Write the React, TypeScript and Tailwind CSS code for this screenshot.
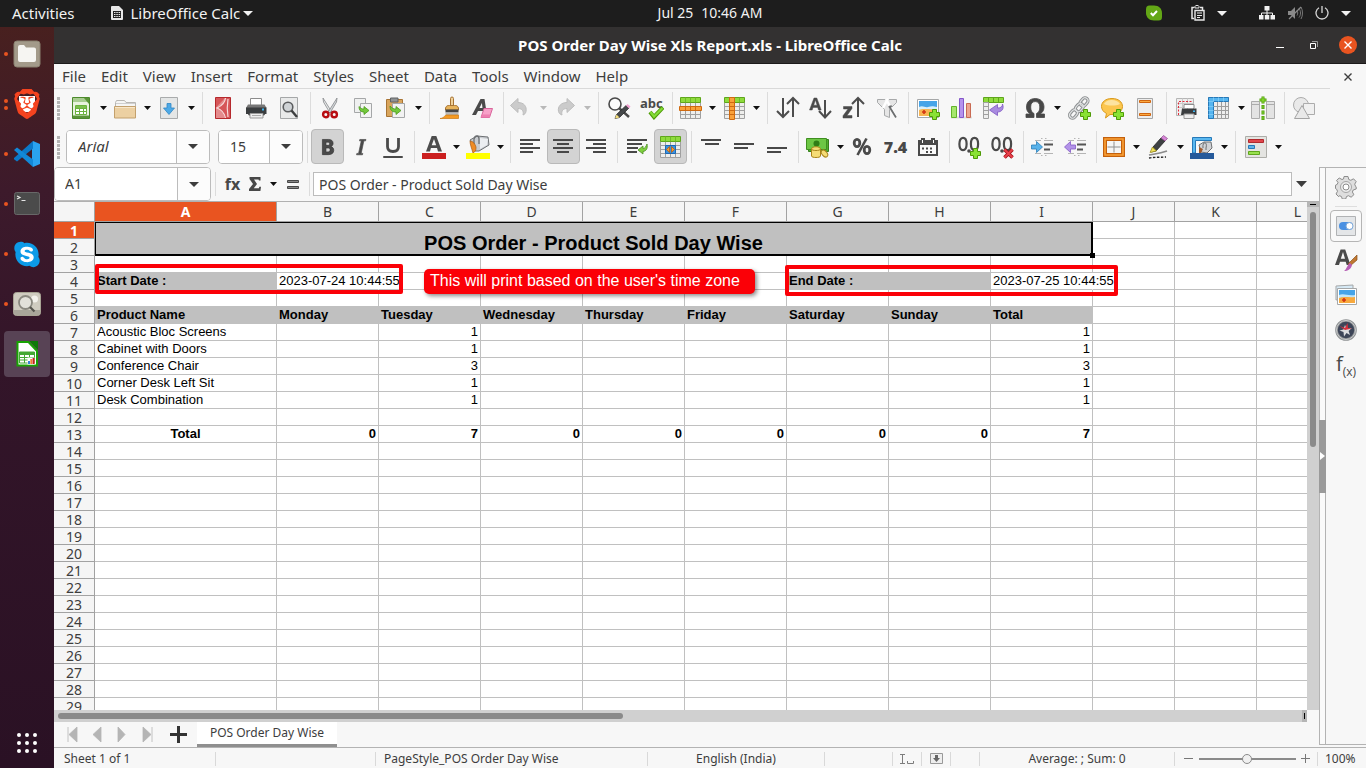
import type { ReactNode } from "react";
import { FaSkype } from "react-icons/fa";
import { SiBrave } from "react-icons/si";

/* ---------- drawing helpers ---------- */

function Icon({ children, label }: { children: ReactNode; label?: string }) {
  return (
    <svg width="24" height="24" viewBox="0 0 24 24" fill="none" role="img" aria-label={label} className="shrink-0">
      {children}
    </svg>
  );
}

function Plus({ x, y }: { x: number; y: number }) {
  return (
    <path
      transform={`translate(${x} ${y})`}
      d="M3.5.5h4v3h3v4h-3v3h-4v-3h-3v-4h3z"
      fill="#8ae234"
      stroke="#4e9a06"
    />
  );
}

function GridBase({ x = 2, y = 1 }: { x?: number; y?: number }) {
  return (
    <g transform={`translate(${x} ${y})`}>
      <path d="M.5.5h20v21H.5z" fill="#eeeeec" />
      <path d="M.5 5.500v16h20v-16M.5 13.500h20M.5 9.500h20M.5 17.500h20M5.500 5.500v16M10.500 5.500v16M15.500 5.500v16" stroke="#a0a0a0" />
      <path d="M.5.5h20v5H.5z" fill="#8edb3c" stroke="#5fa61c" />
      <path d="M5.500.5v5M10.500.5v5M15.500.5v5" stroke="#6fb92c" />
    </g>
  );
}

const decimals = (
  <>
    <path
      d="M6 2.800c2.600 0 3.600 3 3.600 6.200s-1 6.200-3.600 6.200S2.400 12 2.400 9 3.400 2.800 6 2.800zM17.500 2.800c2.600 0 3.600 3 3.600 6.200s-1 6.200-3.600 6.200-3.600-3.200-3.600-6.200 1-6.200 3.600-6.200z"
      stroke="#4a4a4a"
      strokeWidth="2.200"
    />
    <circle cx="12" cy="16" r="1.800" fill="#4a4a4a" />
  </>
);

const indentLines = (
  <>
    <path d="M4 5.500h6M13 5.500h9M4 18.500h6M13 18.500h9M10 3.500h1.500M14 3.500h1.500M10 20.500h1.500M14 20.500h1.500" stroke="#b5b5b5" />
    <path d="M13 9.500h9M13 14.500h6" stroke="#555" strokeWidth="2" />
  </>
);

const ic = {
  newDoc: (
    <>
      <path d="M3.500 1.500h17v21h-17z" fill="#e9f3df" stroke="#4c8a2b" />
      <path d="M4 2h16v4H4z" fill="#a9cd92" />
      <path d="M15 2h5v6z" fill="#5a9438" />
      <path d="M4 19.500h16V22H4z" fill="#5a9438" />
      <path d="M6.500 9.500h11v9h-11z" fill="#fff" stroke="#6cb33e" />
      <path d="M6.500 12.500h11M6.500 15.500h11M10.500 9.500v9M14.500 9.500v9" stroke="#6cb33e" />
      <path d="M7 10h10v2H7z" fill="#7cc04e" />
    </>
  ),
  open: (
    <>
      <path d="M2.500 20V6.500l1-2h8l1.500 2h9.500V20z" fill="#f5f5f4" stroke="#b8b6b2" />
      <path d="M3 7.500h19" stroke="#cfcfcf" />
      <path d="M1.500 10.500h21V22h-21z" fill="#ecd0a2" stroke="#c3a06c" />
      <path d="M2 11.500h20" stroke="#f8e6c8" />
    </>
  ),
  save: (
    <>
      <path d="M3.500 1.500h17v21h-17z" fill="#e4e6e6" stroke="#a9abac" />
      <path d="M10 7.500h4V12h3.500L12 18.500 6.500 12H10z" fill="#4da9e6" stroke="#2f87c4" strokeWidth=".8" />
    </>
  ),
  pdf: (
    <>
      <path d="M4.500 1.500h15v21h-15z" fill="#d65659" stroke="#b5292d" />
      <path d="M14 2L5 11.500V22h9c-1-5-4-8-8-10 4-2 8-5 8-10z" fill="#e48b8d" />
      <path d="M14.500 2c-.5 5-4 8-8.500 10 4 1.500 7.500 5 8.500 10M17 3c-1 6-1 12 0 18" stroke="#f7dcdc" strokeWidth="1.200" />
    </>
  ),
  print: (
    <>
      <path d="M6.500 9V2.500h11V9" fill="#fff" stroke="#8c8c8c" />
      <path d="M4 8.500h16.500l2 3.500H2z" fill="#777" />
      <path d="M2 11.500h20.500V18H2z" fill="#3a3d3f" />
      <path d="M4 18h17l-1 1.500H5z" fill="#222" />
      <path d="M6 17.500h13v4.500H6z" fill="#eee" stroke="#999" />
      <path d="M8 19.500h9" stroke="#aaa" />
      <path d="M18 12.500h2v2h-2z" fill="#3fb6f0" />
    </>
  ),
  preview: (
    <>
      <path d="M3.500 1.500h17v21h-17z" fill="#e9eaea" stroke="#a5a7a8" />
      <circle cx="11" cy="11" r="4.800" fill="#cfd3d6" stroke="#5b5d5f" strokeWidth="1.600" />
      <path d="M14.500 14.500l5.500 6.500" stroke="#3d3f40" strokeWidth="2.400" />
    </>
  ),
  cut: (
    <>
      <path d="M5 2l8.500 13.500-1.500 1.500L5.500 6z" fill="#e7e9ea" stroke="#85888a" strokeWidth=".8" />
      <path d="M19 2l-8.500 13.500 1.500 1.500 6.500-11z" fill="#d3d7da" stroke="#85888a" strokeWidth=".8" />
      <ellipse cx="7.800" cy="18.500" rx="2.700" ry="2.700" stroke="#b80d12" strokeWidth="2.400" />
      <ellipse cx="16.200" cy="18.500" rx="2.700" ry="2.700" stroke="#b80d12" strokeWidth="2.400" />
    </>
  ),
  copy: (
    <>
      <path d="M3.500 2.500h11v14h-11z" fill="#eff0f0" stroke="#a5a7a8" />
      <path d="M9.500 7.500h11v14h-11z" fill="#f4f4f4" stroke="#a5a7a8" />
      <path d="M8 10.500c0 4 2 5.500 5 5.500v2.500l5-4-5-4V13c-2 0-3-.5-5-2.500z" fill="#73c83c" stroke="#4a9a1a" strokeWidth=".8" />
    </>
  ),
  paste: (
    <>
      <path d="M2.500 3.500h16v17h-16z" fill="#d9a55c" stroke="#a87434" />
      <path d="M6.500 2h7.500v4H6.500z" fill="#8f9294" stroke="#606365" />
      <path d="M8.500 7.500h12v14h-12z" fill="#f2f2f2" stroke="#a5a7a8" />
      <path d="M6 10c0 4 2 6 6 6v2.500l5-4-5-4V13c-2 0-4-.5-6-3z" fill="#73c83c" stroke="#4a9a1a" strokeWidth=".8" />
    </>
  ),
  brush: (
    <>
      <path d="M12.500 10V2.500a1.500 1.500 0 013 0V10z" fill="#efd19b" stroke="#a87434" />
      <path d="M7.500 12c1-2.500 2-2.500 4-2.500h5c2 0 3 0 4 2.500v2h-13z" fill="#e8b45c" stroke="#a87434" />
      <path d="M7.500 13.500h13v3h-13z" fill="#444" />
      <path d="M7.500 16.500h13v2.500h-13z" fill="#bbb" />
      <path d="M8 19h12.500v3.500H2c3 0 4-2 6-3.500z" fill="#f59a23" stroke="#c97913" strokeWidth=".7" />
    </>
  ),
  clear: (
    <>
      <path d="M1 19L9.500 3h4L16 19h-3.500l-.5-4H7l-2 4zM8.500 12h3l-.6-5z" fill="#4a4a4a" />
      <path d="M13 12.500h8.500l-3 9H10z" fill="#f7a1c8" stroke="#d9659c" />
      <path d="M11 18.500h8.500l-1 3H10z" fill="#ee7fb0" />
    </>
  ),
  undo: <path d="M1.500 9.500L9 2.500v4c6 0 9 4 8 9-.5 2-1.500 3-3 3.500 1-4-1-6.500-5-6.500v4z" fill="#cbcbcb" stroke="#bdbdbd" />,
  redo: <path d="M21.500 9.500L14 2.500v4c-6 0-9.500 4-8.500 9 .5 2 2 3 3.500 3.500-1-4 1-6.500 5-6.500v4z" fill="#cbcbcb" stroke="#bdbdbd" />,
  find: (
    <>
      <circle cx="8" cy="8" r="6" fill="#fbfbfb" stroke="#4a4a4a" strokeWidth="1.600" />
      <path d="M12 12l10 9" stroke="#4a4a4a" strokeWidth="2.400" />
      <path d="M19 9.500l3 2.500-9.500 9.500-4.500 1 1.500-4z" fill="#45484a" stroke="#222" strokeWidth=".7" />
      <path d="M19 9.500l1.500-1.500 3 2.500-1.500 2z" fill="#f0a1cf" />
      <path d="M9.500 18.500l3 3-4.500 1z" fill="#f5df7d" />
    </>
  ),
  spell: (
    <>
      <text x="0" y="12" fontSize="13" fontWeight="700" fill="#4a4a4a" fontFamily="Open Sans, sans-serif">
        abc
      </text>
      <path d="M10 16l4 5L23 11.500" stroke="#4e9a06" strokeWidth="4" />
      <path d="M10.500 16l3.500 4.500L22.500 12" stroke="#83dc36" strokeWidth="2.200" />
    </>
  ),
  rows: (
    <>
      <GridBase />
      <path d="M1.500 10.500h22v4h-22z" fill="#f9a13a" stroke="#cf6a10" />
      <path d="M7.500 10.500v4M12.500 10.500v4M17.500 10.500v4" stroke="#cf6a10" />
    </>
  ),
  cols: (
    <>
      <GridBase />
      <path d="M7.500 1.500h5v22h-5z" fill="#f9a13a" stroke="#cf6a10" />
      <path d="M7.500 6.500h5M7.500 10.500h5M7.500 14.500h5M7.500 18.500h5" stroke="#cf6a10" />
    </>
  ),
  sort: <path d="M7 2v18M1 15l6 6 6-6M17 21V3M11 8l6-6 6 6" stroke="#4d4d4d" strokeWidth="2" />,
  sortAsc: (
    <>
      <path d="M.5 14L5 2h2.800l4.400 12H9.500l-.8-2.600H4L3.200 14zM4.700 9.200h3.400L6.400 4z" fill="#4a4a4a" stroke="#4a4a4a" strokeWidth=".5" />
      <path d="M16 4v17M10 15l6 6.500 6-6.500" stroke="#4d4d4d" strokeWidth="2" />
    </>
  ),
  sortDesc: (
    <>
      <path d="M1.500 10.500h8.500v2L5 19.500h5v2.500H1v-2.200l5-6.800H1.500z" fill="#4a4a4a" stroke="#4a4a4a" strokeWidth=".5" />
      <path d="M16 21V3M10 8l6-6 6 6" stroke="#4d4d4d" strokeWidth="2" />
    </>
  ),
  filter: (
    <>
      <path d="M2.500 3.500h19v3l-7 7v8l-5-2v-6l-7-7z" fill="#e6e6e6" stroke="#a7a9aa" />
      <path d="M13 2.500L8 12M11 3l10 18.500" stroke="#fff" strokeWidth="2.600" />
      <path d="M14 10l7 11.500M14.500 12.500l2-3" stroke="#6d6f70" strokeWidth="1.800" />
    </>
  ),
  image: (
    <>
      <path d="M1.500 3.500h21v18h-21z" fill="#fff" stroke="#a5a7a8" />
      <path d="M3 5h18v9H3z" fill="#46a4e8" />
      <path d="M3 11c4-2 6 1 9 0s5-1 9 0v3H3z" fill="#d9effb" />
      <path d="M3 14c4-2 10 0 18-1v7H3z" fill="#f8b552" />
      <path d="M8 14v4M6 16h4" stroke="#d33413" strokeWidth="1.600" />
      <Plus x={13} y={13} />
    </>
  ),
  chart: (
    <>
      <path d="M2 21.500h21" stroke="#ddd" strokeWidth="2" />
      <path d="M2.500 10.500h5v11h-5z" fill="#a6e66e" stroke="#63b32a" />
      <path d="M10.500 2.500h4v19h-4z" fill="#b592ec" stroke="#8457c9" />
      <path d="M17.500 7.500h4v14h-4z" fill="#eda48f" stroke="#c96a52" />
    </>
  ),
  pivot: (
    <>
      <path d="M1.500 1.500h20v5h-20z" fill="#8edb3c" stroke="#5fa61c" />
      <path d="M6.500 1.500v5M11.500 1.500v5M16.500 1.500v5" stroke="#5fa61c" />
      <path d="M1.500 6.500h5v16h-5zM1.500 10.500h5M1.500 14.500h5M1.500 18.500h5" fill="#eee" stroke="#a0a0a0" />
      <path d="M20.500 8c2 5-1 8-5 8v3.500L7.500 14l8-5.500V12c3 0 5-1 5-4z" fill="#a98be0" stroke="#7d57c1" strokeWidth=".8" />
    </>
  ),
  omega: (
    <path
      d="M3 21.500V18h4.500C4.500 16.500 3.500 14 3.500 11c0-5 3.500-8.500 8.700-8.500S21 6 21 11c0 3-1.200 5.500-4 7h4.500v3.500h-8v-4c2.500-1 3.300-3.500 3.300-6.500 0-3.500-1.600-5.400-4.600-5.400S7.700 7.500 7.700 11c0 3 .9 5.500 3.300 6.500v4z"
      fill="#484848"
      stroke="#484848"
      strokeWidth=".8"
    />
  ),
  link: (
    <>
      <g stroke="#8d9092" strokeWidth="3.200">
        <rect x="12.500" y="3" width="9" height="6" rx="3" transform="rotate(-50 17 6)" />
        <rect x="8" y="9" width="9" height="6" rx="3" transform="rotate(-50 12 12)" />
        <rect x="2" y="15" width="9" height="6" rx="3" transform="rotate(-50 6.500 18)" />
      </g>
      <g stroke="#dfe1e2" strokeWidth="1.200">
        <rect x="12.500" y="3" width="9" height="6" rx="3" transform="rotate(-50 17 6)" />
        <rect x="8" y="9" width="9" height="6" rx="3" transform="rotate(-50 12 12)" />
        <rect x="2" y="15" width="9" height="6" rx="3" transform="rotate(-50 6.500 18)" />
      </g>
      <Plus x={13} y={13} />
    </>
  ),
  comment: (
    <>
      <path d="M12 2.500c6.500 0 10.500 3.500 10.500 8S18 18.500 12 18.500h-2L5.500 22l1-4.500c-3-1.500-5-4-5-7 0-4.500 4-8 10.500-8z" fill="#fcc64f" stroke="#d99a1d" />
      <path d="M4 8c2-3.500 5-4 8-4s6 1 8 4c-4 2-12 2-16 0z" fill="#fde3a0" />
      <Plus x={13} y={13} />
    </>
  ),
  headerFooter: (
    <>
      <path d="M4.500 2.500h15v20h-15z" fill="#ededed" stroke="#a5a7a8" />
      <path d="M6.500 4.500h11v2h-11zM6.500 17.500h11v2h-11z" fill="#fba941" stroke="#d0650e" />
    </>
  ),
  printArea: (
    <>
      <path d="M2.500 2.500h17v17h-17z" fill="#eee" stroke="#b5b5b5" />
      <path d="M2.500 7.500h17M2.500 11.500h17M8.500 2.500v17M13.500 2.500v17" stroke="#c9c9c9" />
      <path d="M4.500 19V5.500H19" stroke="#e22b3a" strokeDasharray="2 1.500" />
      <path d="M10 12V8.500h10V12" fill="#fff" stroke="#8c8c8c" />
      <path d="M8 12.500h14.500V19H7z" fill="#3a3d3f" />
      <path d="M10 18h10v4.500H10z" fill="#eee" stroke="#999" />
      <path d="M19 14.500h2v1.500h-2z" fill="#3fb6f0" />
    </>
  ),
  freeze: (
    <>
      <path d="M1.500 1.500h20v21h-20z" fill="#eee" stroke="#a0a0a0" />
      <path d="M1.500 10.500h20M1.500 14.500h20M1.500 18.500h20M10.500 6v16M14.500 6v16M18.500 6v16" stroke="#9d9d9d" />
      <path d="M1.500 1.500h20v4h-15v17h-5z" fill="#55b5f0" stroke="#2779b8" />
      <path d="M6.500 1.500v4h-5M11.500 1.500v4M16.500 1.500v4M1.500 10.500h5M1.500 14.500h5M1.500 18.500h5" stroke="#79c8f5" />
    </>
  ),
  splitWin: (
    <>
      <path d="M.5 5.500h8v17h-8zM15.500 5.500h8v17h-8z" fill="#e3e3e3" stroke="#acacac" />
      <path d="M0 8.500h9M15 8.500h9" stroke="#acacac" />
      <path d="M12 .5v7M8.500 4h7" stroke="#4e9a06" strokeWidth="3" />
      <path d="M12 1v6M9 4h6" stroke="#8ae234" strokeWidth="1.200" />
      <path d="M12 9v15" stroke="#4e9a06" strokeWidth="3" strokeDasharray="4 1.500" />
      <path d="M12 9.500v14" stroke="#7cd235" strokeWidth="1.200" strokeDasharray="3 2.500" />
    </>
  ),
  shapes: (
    <>
      <circle cx="9" cy="9" r="7.500" fill="#e9e9e9" stroke="#acacac" />
      <path d="M11.500 7.500h11v11h-11z" fill="#f0f0f0" stroke="#acacac" />
      <path d="M10 9.500l7.500 13h-15z" fill="#e9e9e9" stroke="#a4a4a4" />
    </>
  ),
  bold: (
    <path
      transform="translate(2.500 2) scale(.82)"
      d="M6 3h7.500c3.500 0 5.500 1.700 5.500 4.700 0 2-1 3.400-2.700 4 2.200.5 3.500 2.100 3.500 4.500 0 3.300-2.200 5.300-6.300 5.300H6zM10.300 6.300v3.900h2.400c1.400 0 2.100-.7 2.100-2s-.7-1.900-2.200-1.900zm0 7.100v4.800h2.700c1.600 0 2.400-.9 2.400-2.500s-.9-2.300-2.500-2.300z"
      fill="#4a4a4a"
      stroke="#333"
      strokeWidth=".8"
    />
  ),
  italic: <path transform="translate(4 2) scale(.82)" d="M9.500 3h7.500l-.4 1.700h-2.100L11.200 20h2l-.4 1.700H5.500l.4-1.700H8L11.300 4.700h-2.200z" fill="#4a4a4a" stroke="#4a4a4a" strokeWidth=".8" />,
  underline: (
    <>
      <path d="M6.500 3v8.500c0 3.300 1.800 5 5.500 5s5.500-1.700 5.500-5V3" stroke="#4a4a4a" strokeWidth="2.800" />
      <path d="M2.500 21.500h19v1h-19z" fill="#fff" stroke="#4a4a4a" />
    </>
  ),
  fontColor: (
    <>
      <path d="M4 16.500L9.700 1h4.600L20 16.500h-4l-1-3.400H8.900L8 16.500zM9.700 10.200h4.500L12 3.900z" fill="#4d4d4d" />
      <path d="M0 18h24v6H0z" fill="#cb1f1f" />
    </>
  ),
  fill: (
    <>
      <path d="M4 5l7-4 11 1 1 8-10 6H9z" fill="#c9ccd0" stroke="#6d7073" />
      <path d="M14 3l8 1-1 6-7 4z" fill="#eceef1" />
      <path d="M8 9V4c1-4 5-4 5 0v5" stroke="#6d7073" strokeWidth="1.300" />
      <path d="M4 6c3 0 5 3 6 6 0 3 0 4-3 6-1-4-3-8-3-12z" fill="#ef8b24" stroke="#a85a12" strokeWidth=".7" />
      <path d="M0 18h24v6H0z" fill="#ffff00" />
    </>
  ),
  left: <path d="M2 5h20M2 9h13M2 13h20M2 17h13" stroke="#484848" strokeWidth="2" />,
  center: <path d="M2 5h20M6 9h12M2 13h20M6 17h12" stroke="#484848" strokeWidth="2" />,
  right: <path d="M2 5h20M9 9h13M2 13h20M9 17h13" stroke="#484848" strokeWidth="2" />,
  wrap: (
    <>
      <path d="M2 5h20M2 9h15M2 13h11M2 17h10" stroke="#484848" strokeWidth="2" />
      <path d="M22 9c1 5-1 7-4 7.500V19l-5-4 5-4v2.500c2 0 3-2 4-4.500z" fill="#7fd03e" stroke="#4a8f20" strokeWidth=".8" />
    </>
  ),
  merge: (
    <>
      <GridBase y={1} />
      <path d="M7.500 10.500h10v8h-10z" fill="#3d92df" stroke="#1c69b4" />
      <path d="M11.500 11.500v6l-3-3zM13.500 11.500v6l3-3z" fill="#f79a2e" stroke="#b85c0a" strokeWidth=".7" />
    </>
  ),
  top: <path d="M2 5h20M6 9h14" stroke="#484848" strokeWidth="2" />,
  middle: <path d="M2 9h20M2 13h14" stroke="#484848" strokeWidth="2" />,
  bottom: <path d="M2 13h20M2 17h14" stroke="#484848" strokeWidth="2" />,
  currency: (
    <>
      <path d="M2.500 4.500h20v12h-20z" fill="#4fae2c" stroke="#357f1b" />
      <path d="M.5 3.500h20v11H.5z" fill="#6cc644" stroke="#3f8f20" />
      <circle cx="10.500" cy="8.500" r="3" fill="#2f7d16" />
      <path d="M5.500 14c0-3 9-3 9 0v7c0 2-9 2-9 0z" fill="#f5dc76" stroke="#a9841b" />
      <path d="M5.500 14c0 2 9 2 9 0" stroke="#a9841b" />
      <ellipse cx="18.500" cy="18.500" rx="2.500" ry="4" transform="rotate(-40 18.500 18.500)" fill="#f5dc76" stroke="#a9841b" />
    </>
  ),
  percent: (
    <>
      <ellipse cx="7" cy="8" rx="2.800" ry="3.600" stroke="#4a4a4a" strokeWidth="2.800" />
      <ellipse cx="17" cy="15" rx="2.800" ry="3.600" stroke="#4a4a4a" strokeWidth="2.800" />
      <path d="M16.500 3.500L7.500 20" stroke="#4a4a4a" strokeWidth="2.600" />
    </>
  ),
  date: (
    <>
      <path d="M3 6h18v14H3z" fill="#fafafa" stroke="#4a4a4a" strokeWidth="2" />
      <path d="M2 5h20v5H2zM5 3h4v3H5zM15 3h4v3h-4z" fill="#4a4a4a" />
      <path d="M6.500 5v3M17.500 5v3" stroke="#fff" />
      <path d="M6 13.500h2M10 13.500h2M14 13.500h2M10 17h2M14 17h2" stroke="#4a4a4a" strokeWidth="2" />
    </>
  ),
  addDec: (
    <>
      {decimals}
      <Plus x={13} y={13} />
    </>
  ),
  delDec: (
    <>
      {decimals}
      <path d="M14.500 14.500l8 8M22.500 14.500l-8 8" stroke="#a50f17" strokeWidth="3.600" />
      <path d="M14.500 14.500l8 8M22.500 14.500l-8 8" stroke="#e8414b" strokeWidth="1.800" />
    </>
  ),
  indent: (
    <>
      {indentLines}
      <path d="M.5 10h5V6.500l6 5.500-6 5.500V14h-5z" fill="#58b2ea" stroke="#2b7db8" strokeWidth=".8" />
    </>
  ),
  outdent: (
    <>
      {indentLines}
      <path d="M11.500 10h-5V6.500L.5 12l6 5.500V14h5z" fill="#b293e8" stroke="#8459c7" strokeWidth=".8" />
    </>
  ),
  borders: (
    <>
      <path d="M3 4h18v16H3z" fill="#f5f5f5" stroke="#c4600c" strokeWidth="4" />
      <path d="M3 4h18v16H3z" stroke="#fba237" strokeWidth="1.600" />
      <path d="M12 6.500v11M5.500 12h13" stroke="#8f8f8f" />
    </>
  ),
  lineStyle: (
    <>
      <path d="M15 3l4 3-9 10-5 1 2-5z" fill="#3f4244" stroke="#222" strokeWidth=".8" />
      <path d="M15 3l2.500-2.500 4 3L19 6z" fill="#d886d8" stroke="#8a4d8a" strokeWidth=".7" />
      <path d="M6.500 12l4 4-6.500 1.500z" fill="#f0e25c" stroke="#9e8d18" strokeWidth=".7" />
      <path d="M3 20c4-1 10-1 18-4" stroke="#8a8a8a" strokeWidth="1.600" />
      <path d="M3 23c5-1 9-.5 17-1" stroke="#222" strokeDasharray="2.500 1.500" strokeWidth="1.400" />
    </>
  ),
  borderColor: (
    <>
      <path d="M2.500 18V2.500h19v3h-16V18z" fill="#5ab8f0" stroke="#2779b8" />
      <path d="M9 10l5-3h7l1 6-5 5-6-1z" fill="#d1d3d6" stroke="#6d7073" />
      <path d="M13 13c-1-7 5-7 3 0v2" stroke="#6d7073" />
      <path d="M9 12l4 2-2 4H9z" fill="#a05a2c" />
      <path d="M0 18h24v6H0z" fill="#255a9b" />
    </>
  ),
  conditional: (
    <>
      <path d="M1.500 1.500h21v21h-21z" fill="#e4e4e1" stroke="#adada8" />
      <path d="M4.500 4.500h15v3h-15z" fill="#e0464b" stroke="#b12a2e" />
      <path d="M4.500 10.500h6v3h-6z" fill="#60b4ea" stroke="#2779b8" />
      <path d="M4.500 16.500h11v3h-11z" fill="#98e04e" stroke="#5fa61c" />
    </>
  ),
};

/* ---------- toolbar parts ---------- */

function Caret({ muted = false }: { muted?: boolean }) {
  return (
    <svg width="7" height="4" viewBox="0 0 7 4" className="shrink-0">
      <path d="M0 0h7L3.500 4z" fill={muted ? "#b9b9b9" : "#111"} />
    </svg>
  );
}

function Tool({ name, art, active = false }: { name: string; art: ReactNode; active?: boolean }) {
  return (
    <button
      type="button"
      aria-label={name}
      aria-pressed={active}
      className={
        "flex h-[35px] w-[33px] shrink-0 items-center rounded-[4px] border pl-[3px] " +
        (active ? "border-[#b9b9b9] bg-[#d3d3d3]" : "border-transparent")
      }
    >
      <Icon>{art}</Icon>
    </button>
  );
}

function SplitTool({ name, art, muted = false }: { name: string; art: ReactNode; muted?: boolean }) {
  return (
    <div className="flex shrink-0 items-center">
      <Tool name={name} art={art} />
      <button type="button" aria-label={name + " options"} className="flex h-[35px] w-[11px] items-center pl-[2px]">
        <Caret muted={muted} />
      </button>
    </div>
  );
}

const sepMargins = {
  tight: "ml-[3px] mr-px",
  normal: "ml-1 mr-[3px]",
  wide: "ml-[5px] mr-1",
};

function Sep({ size = "normal" }: { size?: keyof typeof sepMargins }) {
  return <div className={"h-8 w-px shrink-0 bg-[#dcdcdc] " + sepMargins[size]} />;
}

function Grip() {
  return (
    <svg width="3" height="24" viewBox="0 0 3 24" className="ml-[3px] mr-[5px] shrink-0">
      <path d="M1.500 1v23" stroke="#b3b3b3" strokeWidth="3" strokeDasharray="3 1" />
    </svg>
  );
}

function Combo({ label, value, box, field }: { label: string; value: string; box: string; field: string }) {
  return (
    <div className={"flex shrink-0 overflow-hidden rounded-[4px] border border-[#bcbcbc] bg-white " + box}>
      <input aria-label={label} defaultValue={value} className={"min-w-0 flex-1 border-r border-[#bcbcbc] bg-white text-[#3d3d3d] outline-none " + field} />
      <button type="button" aria-label={label + " list"} className="flex w-8 items-center justify-center bg-[#fcfcfc]">
        <svg width="10" height="5" viewBox="0 0 10 5">
          <path d="M0 0h10L5 5z" fill="#3d3d3d" />
        </svg>
      </button>
    </div>
  );
}

const menus = ["File", "Edit", "View", "Insert", "Format", "Styles", "Sheet", "Data", "Tools", "Window", "Help"];

function MenuBar() {
  return (
    <div className="flex h-[25px] bg-[#f7f7f7]">
      <nav className="flex flex-1 items-center gap-px border-b border-[#d9d9d9] pl-px">
        {menus.map((m) => (
          <button key={m} type="button" className="px-[7px] text-[15px] leading-5 text-[#3d3d3d]">
            {m}
          </button>
        ))}
      </nav>
      <button type="button" aria-label="Close document" className="flex w-9 items-center justify-center">
        <svg width="8" height="8" viewBox="0 0 8 8">
          <path d="M.5.5l7 7M7.500.5l-7 7" stroke="#3d3d3d" strokeWidth="1.400" />
        </svg>
      </button>
    </div>
  );
}

function StandardBar() {
  return (
    <div className="flex h-[39px] items-center overflow-hidden bg-[#f7f7f7] pb-[2px]">
      <Grip />
      <SplitTool name="New" art={ic.newDoc} />
      <SplitTool name="Open" art={ic.open} />
      <SplitTool name="Save" art={ic.save} />
      <Sep size="wide" />
      <Tool name="Export as PDF" art={ic.pdf} />
      <Tool name="Print" art={ic.print} />
      <Tool name="Print preview" art={ic.preview} />
      <Sep />
      <Tool name="Cut" art={ic.cut} />
      <Tool name="Copy" art={ic.copy} />
      <SplitTool name="Paste" art={ic.paste} />
      <Sep size="wide" />
      <Tool name="Clone formatting" art={ic.brush} />
      <Tool name="Clear formatting" art={ic.clear} />
      <Sep size="tight" />
      <SplitTool name="Undo" art={ic.undo} muted />
      <SplitTool name="Redo" art={ic.redo} muted />
      <Sep size="wide" />
      <Tool name="Find and replace" art={ic.find} />
      <Tool name="Spelling" art={ic.spell} />
      <Sep size="tight" />
      <SplitTool name="Row" art={ic.rows} />
      <SplitTool name="Column" art={ic.cols} />
      <Sep size="wide" />
      <Tool name="Sort" art={ic.sort} />
      <Tool name="Sort ascending" art={ic.sortAsc} />
      <Tool name="Sort descending" art={ic.sortDesc} />
      <Tool name="AutoFilter" art={ic.filter} />
      <Sep />
      <Tool name="Insert image" art={ic.image} />
      <Tool name="Insert chart" art={ic.chart} />
      <Tool name="Pivot table" art={ic.pivot} />
      <Sep />
      <SplitTool name="Special character" art={ic.omega} />
      <Tool name="Hyperlink" art={ic.link} />
      <Tool name="Comment" art={ic.comment} />
      <Tool name="Headers and footers" art={ic.headerFooter} />
      <Sep />
      <Tool name="Define print area" art={ic.printArea} />
      <SplitTool name="Freeze rows and columns" art={ic.freeze} />
      <Tool name="Split window" art={ic.splitWin} />
      <Sep />
      <Tool name="Show draw functions" art={ic.shapes} />
    </div>
  );
}

function FormattingBar() {
  return (
    <div className="flex h-[39px] items-center overflow-hidden bg-[#f7f7f7] pb-[2px]">
      <Grip />
      <div className="ml-px flex gap-2">
        <Combo label="Font name" value="Arial" box="h-[34px] w-[144px]" field="pl-[11px] text-[15px] italic" />
        <Combo label="Font size" value="15" box="h-[34px] w-[85px]" field="pl-[11px] text-sm" />
      </div>
      <Sep />
      <Tool name="Bold" art={ic.bold} active />
      <Tool name="Italic" art={ic.italic} />
      <Tool name="Underline" art={ic.underline} />
      <Sep />
      <SplitTool name="Font color" art={ic.fontColor} />
      <SplitTool name="Background color" art={ic.fill} />
      <Sep />
      <Tool name="Align left" art={ic.left} />
      <Tool name="Center" art={ic.center} active />
      <Tool name="Align right" art={ic.right} />
      <Sep />
      <Tool name="Wrap text" art={ic.wrap} />
      <Tool name="Merge cells" art={ic.merge} active />
      <Sep />
      <Tool name="Align top" art={ic.top} />
      <Tool name="Center vertically" art={ic.middle} />
      <Tool name="Align bottom" art={ic.bottom} />
      <Sep />
      <SplitTool name="Currency" art={ic.currency} />
      <Tool name="Percent" art={ic.percent} />
      <button type="button" className="h-[35px] w-[33px] shrink-0 text-center font-['Open_Sans',sans-serif] text-base font-extrabold text-[#484848]">
        7.4
      </button>
      <Tool name="Date" art={ic.date} />
      <Sep />
      <Tool name="Add decimal place" art={ic.addDec} />
      <Tool name="Delete decimal place" art={ic.delDec} />
      <Sep />
      <Tool name="Increase indent" art={ic.indent} />
      <Tool name="Decrease indent" art={ic.outdent} />
      <Sep size="tight" />
      <SplitTool name="Borders" art={ic.borders} />
      <SplitTool name="Border style" art={ic.lineStyle} />
      <SplitTool name="Border color" art={ic.borderColor} />
      <Sep size="wide" />
      <SplitTool name="Conditional formatting" art={ic.conditional} />
    </div>
  );
}

function FormulaBar() {
  return (
    <div className="flex h-[35px] items-center border-b border-[#b0b0b0] bg-[#f7f7f7]">
      <Combo label="Cell" value="A1" box="h-[34px] w-[157px]" field="pl-[10px] text-sm" />
      <div className="ml-1 h-6 w-px shrink-0 bg-[#dcdcdc]" />
      <button type="button" aria-label="Function wizard" className="ml-2 w-[17px] shrink-0 font-['Open_Sans',sans-serif] text-base font-bold leading-5 text-[#484848]">
        fx
      </button>
      <button type="button" aria-label="Select function" className="ml-2 flex shrink-0 items-center gap-[9px]">
        <svg width="12" height="14" viewBox="0 0 12 14">
          <path d="M.5 0h11v3.500h-1.500L9.500 2.500H5L8 7l-3.200 4.200h5l.6-1.400H12L11.400 14H0v-2l4-5L.5 2z" fill="#484848" />
        </svg>
        <Caret />
      </button>
      <button type="button" aria-label="Formula" className="ml-[10px] shrink-0">
        <svg width="12" height="9" viewBox="0 0 12 9">
          <path d="M.5.5h11v2H.5zM.5 6.500h11v2H.5z" fill="#888" stroke="#484848" />
        </svg>
      </button>
      <div className="ml-[10px] h-6 w-px shrink-0 bg-[#dcdcdc]" />
      <input
        aria-label="Input line"
        defaultValue="POS Order - Product Sold Day Wise"
        className="ml-[3px] h-6 min-w-0 flex-1 border border-[#bcbcbc] bg-white pl-[5px] text-sm text-[#3d3d3d] outline-none"
      />
      <button type="button" aria-label="Expand formula bar" className="flex w-[27px] shrink-0 pl-[4px]">
        <svg width="11" height="6" viewBox="0 0 11 6">
          <path d="M0 0h11L5.500 6z" fill="#3d3d3d" />
        </svg>
      </button>
    </div>
  );
}

/* ---------- sheet ---------- */

const columns = ["A", "B", "C", "D", "E", "F", "G", "H", "I", "J", "K", "L"];

type Cell = { text?: string; bold?: boolean; fill?: boolean; align?: "right" | "center"; spill?: boolean };

const product = (name: string, qty: string): Record<string, Cell> => ({
  A: { text: name },
  C: { text: qty, align: "right" },
  I: { text: qty, align: "right" },
});
const head = (text: string): Cell => ({ text, bold: true, fill: true });
const sum = (text: string): Cell => ({ text, bold: true, align: "right" });

const cells: Record<number, Record<string, Cell>> = {
  4: {
    A: head("Start Date :"),
    B: { text: "2023-07-24 10:44:55", spill: true },
    G: head("End Date :"),
    H: { fill: true },
    I: { text: "2023-07-25 10:44:55", spill: true },
  },
  6: {
    A: head("Product Name"),
    B: head("Monday"),
    C: head("Tuesday"),
    D: head("Wednesday"),
    E: head("Thursday"),
    F: head("Friday"),
    G: head("Saturday"),
    H: head("Sunday"),
    I: head("Total"),
  },
  7: product("Acoustic Bloc Screens", "1"),
  8: product("Cabinet with Doors", "1"),
  9: product("Conference Chair", "3"),
  10: product("Corner Desk Left Sit", "1"),
  11: product("Desk Combination", "1"),
  13: {
    A: { text: "Total", bold: true, align: "center" },
    B: sum("0"),
    C: sum("7"),
    D: sum("0"),
    E: sum("0"),
    F: sum("0"),
    G: sum("0"),
    H: sum("0"),
    I: sum("7"),
  },
};

function SheetCell({ cell }: { cell?: Cell }) {
  const fill = cell?.fill ? "bg-[#c0c0c0]" : "bg-white";
  const line = cell?.spill ? "border-r-transparent" : "border-r-[#c0c0c0]";
  const align = cell?.align === "right" ? "text-right" : cell?.align === "center" ? "text-center" : "text-left";
  return (
    <td className={`border-b border-r border-b-[#c0c0c0] px-[2px] py-0 ${line} ${fill} ${align} ${cell?.bold ? "font-bold" : ""}`}>
      {cell?.text}
    </td>
  );
}

function Sheet() {
  return (
    <div className="relative min-h-0 flex-1 overflow-hidden bg-white">
      <table className="w-[1285px] table-fixed border-separate border-spacing-0 whitespace-nowrap font-['Liberation_Sans',Arial,sans-serif] text-[13px] leading-4 text-black">
        <colgroup>
          <col className="w-[41px]" />
          <col className="w-[182px]" />
          {columns.slice(1, 9).map((c) => (
            <col key={c} className="w-[102px]" />
          ))}
          <col className="w-[82px]" />
          <col className="w-[82px]" />
          <col className="w-[82px]" />
        </colgroup>
        <thead className="font-['Noto_Sans',sans-serif] text-sm leading-[19px] text-[#3d3d3d]">
          <tr className="h-5">
            <td className="border-b border-r border-[#a2a2a2] bg-[#f5f5f5] p-0" />
            {columns.map((c) => (
              <th
                key={c}
                scope="col"
                className={
                  c === "A"
                    ? "border-b border-r border-[#a2a2a2] bg-[#e95420] p-0 font-bold text-white"
                    : "border-b border-r border-[#a2a2a2] bg-[#f5f5f5] p-0 font-normal"
                }
              >
                {c}
              </th>
            ))}
          </tr>
        </thead>
        <tbody>
          {Array.from({ length: 29 }, (_, i) => i + 1).map((r) => (
            <tr key={r} className="h-[17px]">
              <th
                scope="row"
                className={
                  r === 1
                    ? "border-b border-r border-[#a2a2a2] bg-[#e95420] px-0 pb-0 pt-[2px] font-['Noto_Sans',sans-serif] text-sm font-bold leading-[14px] text-white"
                    : "border-b border-r border-[#a2a2a2] bg-[#f5f5f5] px-0 pb-0 pt-[2px] font-['Noto_Sans',sans-serif] text-sm font-normal leading-[14px] text-[#3d3d3d]"
                }
              >
                {r}
              </th>
              {r === 1 && (
                <td
                  colSpan={9}
                  rowSpan={2}
                  className="relative border-2 border-l border-t border-black bg-[#c0c0c0] px-0 pb-0 pt-2 text-center text-xl font-bold leading-5"
                >
                  POS Order - Product Sold Day Wise
                  <span className="absolute -bottom-1 -right-1 size-[5px] bg-black" />
                </td>
              )}
              {columns.slice(r < 3 ? 9 : 0).map((c) => (
                <SheetCell key={c} cell={cells[r]?.[c]} />
              ))}
            </tr>
          ))}
        </tbody>
      </table>
      <div className="absolute left-[41px] top-[62px] h-[30px] w-[308px] rounded-[2px] border-4 border-[#fb0007]" />
      <div className="absolute left-[731px] top-[63px] h-[31px] w-[333px] rounded-[2px] border-4 border-[#fb0007]" />
      <div className="absolute left-[370px] top-[67px] w-[331px] whitespace-nowrap rounded-[5px] bg-[#fb0007] pb-[2px] pl-[6px] font-['Liberation_Sans',Arial,sans-serif] text-base leading-[23px] text-white shadow-[2px_2px_4px_rgba(0,0,0,0.45)]">
        This will print based on the user's time zone
      </div>
    </div>
  );
}

function VerticalScroll() {
  return (
    <div className="flex w-3 shrink-0 flex-col items-center bg-[#d0d0d0]">
      <div className="flex h-[5px] w-full items-center justify-center bg-[#b5b5b5]">
        <div className="h-px w-[6px] bg-black" />
      </div>
      <div className="mt-[5px] h-[235px] w-[6px] rounded-full bg-[#8a8a8a]" />
    </div>
  );
}

function HorizontalScroll() {
  return (
    <div className="mr-3 flex h-3 shrink-0 items-center bg-[#d0d0d0]">
      <div className="ml-1 h-[6px] w-[565px] rounded-full bg-[#8a8a8a]" />
      <div className="ml-auto flex h-full w-[5px] items-center justify-center bg-[#b5b5b5]">
        <div className="h-[6px] w-px bg-black" />
      </div>
    </div>
  );
}

const tabArrows = [
  { name: "First sheet", d: "M1 1v15M10 1L2 8.500 10 16z" },
  { name: "Previous sheet", d: "M9 1L1 8.500 9 16z" },
  { name: "Next sheet", d: "M1 1l7 7.500L1 16z" },
  { name: "Last sheet", d: "M10 1v15M1 1l8 7.500L1 16z" },
];

function SheetTabs() {
  return (
    <div className="flex h-[25px] shrink-0 bg-[#f7f7f7] pl-[13px]">
      {tabArrows.map((a) => (
        <button key={a.name} type="button" aria-label={a.name} className="flex w-[25px] items-center">
          <svg width="11" height="17" viewBox="0 0 11 17">
            <path d={a.d} fill="#b5b5b5" stroke="#b5b5b5" strokeWidth=".8" />
          </svg>
        </button>
      ))}
      <button type="button" aria-label="Add sheet" className="flex w-[30px] items-center pl-[3px]">
        <svg width="17" height="17" viewBox="0 0 17 17">
          <path d="M8.500 0v17M0 8.500h17" stroke="#333" strokeWidth="3" />
        </svg>
      </button>
      <button type="button" className="w-[140px] border-b-[3px] border-[#8f8f8f] bg-white text-xs leading-[22px] text-[#3d3d3d]">
        POS Order Day Wise
      </button>
    </div>
  );
}

/* ---------- sidebar ---------- */

const sidebarItems: { name: string; art: ReactNode; active?: boolean }[] = [
  {
    name: "Properties",
    active: true,
    art: (
      <>
        <path d="M2.500 2.500h19v19h-19z" fill="#e4e6e8" stroke="#b0b2b4" />
        <rect x="5" y="8" width="14" height="8" rx="4" fill="#4a90e2" />
        <circle cx="15.500" cy="12" r="3.500" fill="#fff" stroke="#7fa9d8" />
      </>
    ),
  },
  {
    name: "Styles",
    art: (
      <>
        <path d="M1 17L6.600 1.500h4.600L16.500 17h-3.800l-1-3.200H6L5 17zM6.800 10.700h4.200L9 4z" fill="#4a4a4a" />
        <path d="M23 7v5l-7 6-2-2z" fill="#c07832" stroke="#8a5018" strokeWidth=".7" />
        <path d="M16 15l2 2c-1 4-4 6-8 6 3-2 3-6 6-8z" fill="#b75fb5" />
      </>
    ),
  },
  {
    name: "Gallery",
    art: (
      <>
        <path d="M2 3l17-1v12L2 17z" fill="#d6e9f5" stroke="#a5a7a8" />
        <path d="M3.500 5.500h19v16h-19z" fill="#fff" stroke="#a5a7a8" />
        <path d="M5 7h16v7H5z" fill="#46a4e8" />
        <path d="M5 12c5-2 8 1 16 0v3H5z" fill="#bfe6fa" />
        <path d="M5 15c5-2 10 0 16-1v6H5z" fill="#f8a93d" />
        <path d="M10 15v4M8 17h4" stroke="#d33413" strokeWidth="1.600" />
      </>
    ),
  },
  {
    name: "Navigator",
    art: (
      <>
        <circle cx="12" cy="12" r="9.500" fill="#3d4558" stroke="#8e9193" strokeWidth="2.600" />
        <circle cx="12" cy="12" r="9.500" stroke="#c9cbcd" strokeWidth="1" />
        <path d="M11 7l1.800 4 5-1-3.200 3 1.400 4-3.500-2L10 18.500l-.5-4.500-4-1.500 4-1z" fill="#dcdde0" />
        <path d="M5.500 8l5.500 2 2.500-5 .5 5 4 .5-7 1.500z" fill="#d62f3c" />
      </>
    ),
  },
];

function Sidebar() {
  return (
    <div className="mb-[2px] flex shrink-0 border-b border-[#b3b3b3]">
      <div className="flex w-[7px] flex-col justify-center border-x border-t border-[#b3b3b3] bg-[#fafafa]">
        <div className="-mx-px flex h-[73px] items-center bg-[#9a9a9a]">
          <svg width="6" height="8" viewBox="0 0 6 8">
            <path d="M1 0l5 4-5 4z" fill="#fff" />
          </svg>
        </div>
      </div>
      <div className="flex w-10 flex-col items-center border-t border-[#b3b3b3] bg-[#f7f7f7] pt-[7px]">
        <button type="button" aria-label="Sidebar settings">
          <Icon>
            <path
              d="M10 1.500h4l.8 3 2 .8 2.700-1.500 2.700 2.800-1.500 2.600.8 2 .7.800v2l-3 1-.8 2 1.500 2.700-2.800 2.500-2.600-1.500-2 .8-.8 2.500h-3.400l-.9-2.500-2-.8L4.700 21.700 2 19l1.500-2.700-.8-2-1.200-.8v-3.300l1.700-.8.8-2L2.500 5.500 5.200 3 8 4.500l1.500-.5z"
              fill="#dedede"
              stroke="#8c8c8c"
            />
            <circle cx="12" cy="12" r="5.500" fill="#ececec" stroke="#a5a5a5" />
            <circle cx="12" cy="12" r="3" fill="#fff" stroke="#8c8c8c" />
          </Icon>
        </button>
        <div className="mb-[3px] mt-[7px] h-px w-[22px] bg-[#dedede]" />
        <div className="flex flex-col">
          {sidebarItems.map((s) => (
            <button
              key={s.name}
              type="button"
              aria-label={s.name}
              className={
                s.active
                  ? "flex size-8 items-center justify-center rounded-[4px] border border-[#b5b5b5] bg-[#f9f9f9]"
                  : "flex h-[35px] w-8 items-center justify-center"
              }
            >
              <Icon>{s.art}</Icon>
            </button>
          ))}
          <button type="button" aria-label="Functions" className="h-[35px] w-8 text-center font-['Open_Sans',sans-serif] text-xl leading-[30px] text-[#484848]">
            f<span className="align-sub text-xs">(x)</span>
          </button>
        </div>
      </div>
    </div>
  );
}

/* ---------- status bar ---------- */

function StatusBar() {
  return (
    <footer className="flex h-[21px] shrink-0 items-center divide-x divide-[#d9d9d9] border-t border-[#b3b3b3] bg-[#f7f7f7] pt-px text-xs leading-[14px] text-[#3d3d3d]">
      <div className="w-[162px] pl-[10px]">Sheet 1 of 1</div>
      <div className="h-[14px] w-[160px]" />
      <div className="flex-1 pl-2">PageStyle_POS Order Day Wise</div>
      <div className="w-[177px] text-center">English (India)</div>
      <div className="h-[14px] w-[68px]" />
      <div className="flex h-[14px] w-[29px] items-center justify-center">
        <svg width="16" height="12" viewBox="0 0 16 12">
          <path d="M1 1.500h5M3.500 1.500v9M1 10.500h5M8.500 8v2.500h6V8" stroke="#7d7d7d" fill="none" />
        </svg>
      </div>
      <div className="flex h-[14px] w-[29px] items-center justify-center">
        <svg width="13" height="11" viewBox="0 0 13 11">
          <path d="M.5.5h12v10H.5z" fill="#eee" stroke="#999" />
          <path d="M5 2h3v3h2L6.500 9 3 5h2z" fill="#666" />
        </svg>
      </div>
      <div className="h-[14px] w-[29px]" />
      <div className="w-[195px] text-center">Average: ; Sum: 0</div>
      <div className="flex h-[14px] w-[143px] items-center justify-between pl-[9px] pr-[7px]">
        <button type="button" aria-label="Zoom out">
          <svg width="9" height="9" viewBox="0 0 9 9">
            <path d="M0 4.500h9" stroke="#777" />
          </svg>
        </button>
        <input
          type="range"
          aria-label="Zoom"
          defaultValue={50}
          className="h-[10px] w-[97px] appearance-none bg-[linear-gradient(#8a8a8a,#8a8a8a)] bg-[length:100%_2px] bg-center bg-no-repeat [&::-webkit-slider-thumb]:size-[10px] [&::-webkit-slider-thumb]:appearance-none [&::-webkit-slider-thumb]:rounded-full [&::-webkit-slider-thumb]:border [&::-webkit-slider-thumb]:border-[#8a8a8a] [&::-webkit-slider-thumb]:bg-[#f0f0f0]"
        />
        <button type="button" aria-label="Zoom in">
          <svg width="9" height="9" viewBox="0 0 9 9">
            <path d="M0 4.500h9M4.500 0v9" stroke="#777" />
          </svg>
        </button>
      </div>
      <div className="w-[48px] pl-[7px]">100%</div>
    </footer>
  );
}

/* ---------- desktop ---------- */

function TopCaret() {
  return (
    <svg width="10" height="5" viewBox="0 0 10 5">
      <path d="M0 0h10L5 5z" fill="#f2f2f2" />
    </svg>
  );
}

function TopPanel() {
  return (
    <header className="grid h-[27px] shrink-0 grid-cols-[54px_1fr_1fr_1fr] items-center bg-[#1d1d1d] pb-px text-sm leading-5 text-[#f2f2f2]">
      <div className="col-span-2 flex items-center pl-3 text-[15px]">
        <button type="button">Activities</button>
        <button type="button" className="ml-9 flex items-center">
          <svg width="12" height="14" viewBox="0 0 12 14">
            <path d="M0 1a1 1 0 011-1h7l4 4v9a1 1 0 01-1 1H1a1 1 0 01-1-1z" fill="#e8e8e8" />
            <path d="M2 5h8v7H2z" fill="#222" />
            <path d="M3 6h1.500v1H3zM5.300 6h1.500v1H5.300zM7.600 6h1.500v1H7.600zM3 8h1.500v1H3zM5.300 8h1.500v1H5.300zM7.600 8h1.500v1H7.600zM3 10h1.500v1H3zM5.300 10h1.500v1H5.300zM7.600 10h1.500v1H7.600z" fill="#e8e8e8" />
          </svg>
          <span className="ml-2 mr-[3px]">LibreOffice Calc</span>
          <TopCaret />
        </button>
      </div>
      <button type="button" className="text-center">
        <span className="mr-2">Jul 25</span>10:46 AM
      </button>
      <div className="flex items-center justify-end pr-[15px]">
        <svg width="16" height="16" viewBox="0 0 16 16" className="mr-[29px]">
          <path d="M0 4.500C0 2 1 .5 3.500.5H8c5 0 8 3.500 8 7.500v4c0 2.500-1 3.500-3.500 3.500H8C3 15.500 0 12 0 8z" fill="#63a716" />
          <path d="M4.800 8l2.200 2.300 4-4.300" stroke="#fff" strokeWidth="2" fill="none" />
        </svg>
        <svg width="14" height="16" viewBox="0 0 14 16" fill="none" className="mr-3">
          <path d="M3 13.500H1v-11h2.500M9 2.500h2.500V5" stroke="#e8e8e8" strokeWidth="1.500" />
          <path d="M4 1.500c0-1.500 4-1.500 4 0V3H4z" stroke="#e8e8e8" />
          <path d="M4 5.500h9v9.500H4z" stroke="#e8e8e8" strokeWidth="1.400" />
          <path d="M6 8h5M6 10.500h5M6 12.500h3" stroke="#e8e8e8" />
        </svg>
        <span className="mr-8 flex">
          <TopCaret />
        </span>
        <svg width="16" height="14" viewBox="0 0 16 14" className="mr-[13px]">
          <path d="M5.500 0h5v4.500h-5zM0 9h4.500v4.500H0zM5.800 9h4.500v4.500H5.800zM11.500 9H16v4.500h-4.500z" fill="#f2f2f2" />
          <path d="M8 4v5M2.500 9.500V7h11v2.500" stroke="#f2f2f2" fill="none" />
        </svg>
        <svg width="15" height="14" viewBox="0 0 15 14" fill="none" className="mr-3">
          <path d="M0 5h3l4-4v12L3 9H0z" fill="#8a8a8a" />
          <path d="M9 4.500c1 1.500 1 3.500 0 5M11 2.500c2 2.500 2 6.500 0 9M13 1c2 3.500 2 8.500 0 12" stroke="#777" />
          <path d="M1 13L13 1" stroke="#8a8a8a" strokeWidth="1.300" />
        </svg>
        <svg width="14" height="14" viewBox="0 0 14 14" fill="none" className="mr-3">
          <path d="M4 1.800a6 6 0 106 0M7 0v7" stroke="#d8d8d8" strokeWidth="1.300" />
        </svg>
        <TopCaret />
      </div>
    </header>
  );
}

function DockIcon({ children }: { children: ReactNode }) {
  return (
    <svg width="28" height="28" viewBox="0 0 28 28" fill="none">
      {children}
    </svg>
  );
}

const dock: { name: string; dots: number; active?: boolean; art: ReactNode }[] = [
  {
    name: "Files",
    dots: 1,
    art: (
      <DockIcon>
        <rect x="1" y="1" width="26" height="26" rx="3" fill="#a39a8a" stroke="#8a8171" />
        <path d="M5 7a2 2 0 012-2h4l2 2.500h8a2 2 0 012 2V20a2 2 0 01-2 2H7a2 2 0 01-2-2z" fill="#f6f5f2" />
      </DockIcon>
    ),
  },
  {
    name: "Brave",
    dots: 2,
    art: (
      <span className="relative flex size-[30px] items-center justify-center">
        <span className="absolute size-4 bg-white" />
        <SiBrave className="relative size-[30px] text-[#f4431f]" />
      </span>
    ),
  },
  {
    name: "Visual Studio Code",
    dots: 1,
    art: (
      <DockIcon>
        <path d="M20 1l7 3v20l-7 3-1-7V8z" fill="#2aa3f0" />
        <path d="M20 1v7.500L4 21.500l-3-2.300V18z" fill="#0b79c9" />
        <path d="M1 10l3-2.500 16 12V27z" fill="#1288d8" />
      </DockIcon>
    ),
  },
  {
    name: "Terminal",
    dots: 1,
    art: (
      <DockIcon>
        <rect x="1.500" y="2.500" width="25" height="22" rx="2" fill="#4b4b4b" stroke="#686868" />
        <path d="M4 6l3 1.500L4 9M8.500 10.500h4" stroke="#e6e6e6" strokeWidth="1.200" />
      </DockIcon>
    ),
  },
  {
    name: "Skype",
    dots: 1,
    art: (
      <span className="relative flex size-7 items-center justify-center">
        <span className="absolute size-5 rounded-full bg-white" />
        <FaSkype className="relative size-[29px] text-[#0c9be8]" />
      </span>
    ),
  },
  {
    name: "Image Viewer",
    dots: 1,
    art: (
      <DockIcon>
        <rect x=".5" y="2.500" width="27" height="23" rx="3" fill="#cfccc0" stroke="#a9a595" />
        <path d="M1 20h26v3a2 2 0 01-2 2H3a2 2 0 01-2-2z" fill="#a9a69a" />
        <circle cx="21.500" cy="9" r="3.500" fill="#f3f2ec" />
        <circle cx="12.500" cy="12.500" r="6.500" fill="#e2e1da" stroke="#8a8980" strokeWidth="1.800" />
        <path d="M17 17l4.500 4.500" stroke="#55544e" strokeWidth="2.200" />
      </DockIcon>
    ),
  },
  {
    name: "LibreOffice Calc",
    dots: 1,
    active: true,
    art: (
      <DockIcon>
        <path d="M4.500 2h11L24 11v14.500H4.500z" fill="#fff" stroke="#18a303" strokeWidth="2" />
        <path d="M16.500 1H25v9z" fill="#0d7a08" />
        <path d="M6.500 12h15v11h-15z" fill="#fff" stroke="#43a833" />
        <path d="M6.500 12h15v3h-15z" fill="#43a833" />
        <path d="M6.500 17.500h15M6.500 20h15M11.500 12v11M16.500 12v11" stroke="#43a833" />
        <path d="M14.500 17.500h7v7h-7z" fill="#fff" />
        <path d="M15 21h2v3h-2z" fill="#3a83d4" />
        <path d="M17.300 19h2v5h-2z" fill="#f07d33" />
        <path d="M19.600 18h2v6h-2z" fill="#c9211e" />
      </DockIcon>
    ),
  },
];

function Dock() {
  return (
    <aside className="flex w-[54px] shrink-0 flex-col bg-[linear-gradient(#48201f_0%,#3d1a2b_22%,#331529_45%,#2a1124_100%)] pt-[2px]">
      {dock.map((d) => (
        <button key={d.name} type="button" aria-label={d.name} className="flex h-[50px] items-center">
          <span className="ml-1 flex w-0 flex-col gap-[3px]">
            {Array.from({ length: d.dots }, (_, i) => (
              <span key={i} className="size-1 rounded-full bg-[#e95420]" />
            ))}
          </span>
          <span className={d.active ? "flex size-[46px] items-center justify-center rounded-[4px] bg-[#584355]" : "flex size-[46px] items-center justify-center"}>
            {d.art}
          </span>
        </button>
      ))}
      <button type="button" aria-label="Show applications" className="mb-[15px] ml-[17px] mt-auto grid w-5 grid-cols-3 gap-[4px]">
        {Array.from({ length: 9 }, (_, i) => (
          <span key={i} className="size-1 rounded-full bg-white" />
        ))}
      </button>
    </aside>
  );
}

function TitleBar() {
  return (
    <div className="grid h-[37px] shrink-0 grid-cols-[110px_1fr_110px] items-center border-b border-[#1c1a1a] bg-[#333131]">
      <h1 className="col-start-2 text-center text-[15px] font-bold leading-5 text-white">POS Order Day Wise Xls Report.xls - LibreOffice Calc</h1>
      <div className="flex items-center justify-end pr-[9px]">
        <button type="button" aria-label="Minimize" className="mr-[26px]">
          <svg width="8" height="8" viewBox="0 0 8 8">
            <path d="M0 6.500h8" stroke="#fff" />
          </svg>
        </button>
        <button type="button" aria-label="Restore" className="mr-[21px]">
          <svg width="8" height="8" viewBox="0 0 8 8" fill="none">
            <path d="M.5 2.500h5v5h-5z" stroke="#fff" />
            <path d="M2 .5h5.500V6" stroke="#999" />
          </svg>
        </button>
        <button type="button" aria-label="Close" className="flex size-[18px] items-center justify-center rounded-full bg-[#e95420]">
          <svg width="8" height="8" viewBox="0 0 8 8">
            <path d="M.5.5l7 7M7.500.5l-7 7" stroke="#fff" strokeWidth="1.400" />
          </svg>
        </button>
      </div>
    </div>
  );
}

export default function App() {
  return (
    <div className="flex h-screen flex-col overflow-hidden bg-[#f7f7f7] font-['Noto_Sans',sans-serif]">
      <TopPanel />
      <div className="flex min-h-0 flex-1">
        <Dock />
        <main className="flex min-w-0 flex-1 flex-col">
          <TitleBar />
          <MenuBar />
          <StandardBar />
          <FormattingBar />
          <div className="flex min-h-0 flex-1">
            <div className="flex min-w-0 flex-1 flex-col">
              <FormulaBar />
              <div className="flex min-h-0 flex-1">
                <Sheet />
                <VerticalScroll />
              </div>
              <HorizontalScroll />
              <SheetTabs />
            </div>
            <Sidebar />
          </div>
          <StatusBar />
        </main>
      </div>
    </div>
  );
}
